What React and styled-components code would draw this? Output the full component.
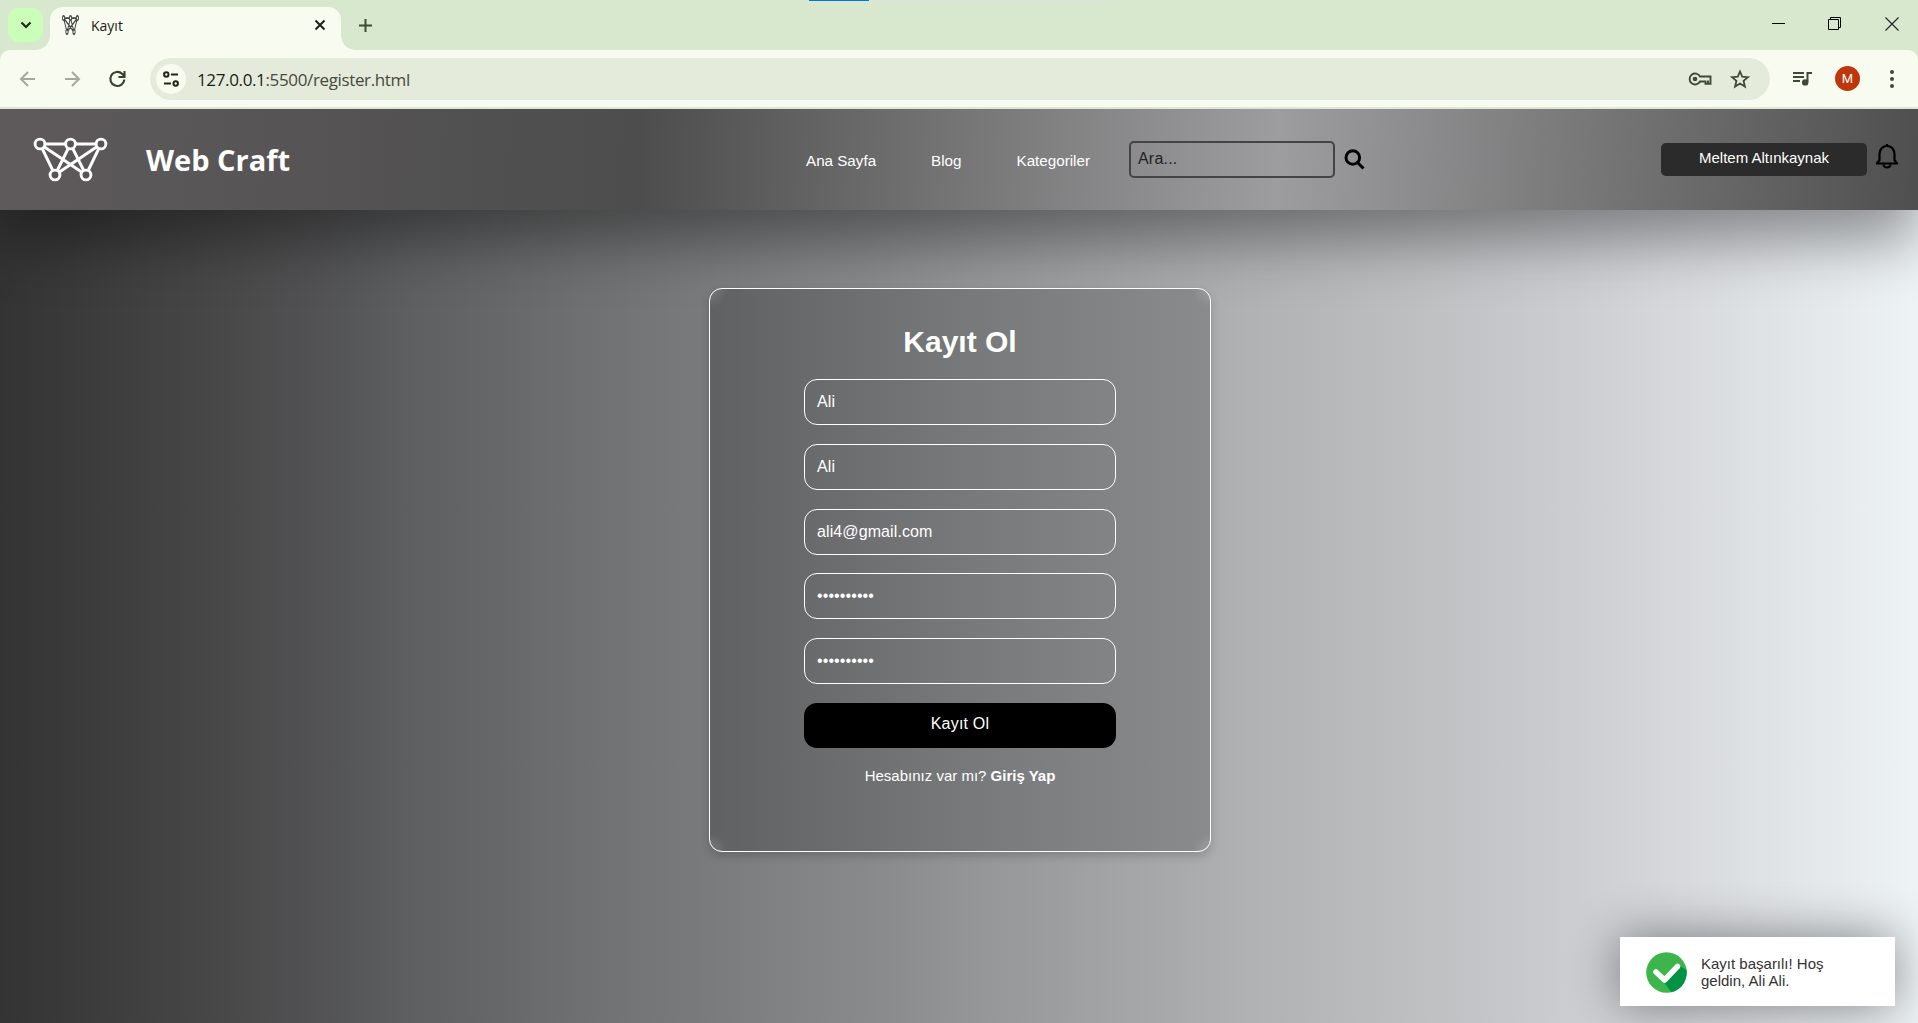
import React from "react";
import styled, { createGlobalStyle } from "styled-components";

const Global = createGlobalStyle`
  * { box-sizing: border-box; }
  html, body { margin: 0; padding: 0; overflow: hidden; }
  body { font-family: "Liberation Sans", Arial, sans-serif; }
  a { color: inherit; text-decoration: none; }
`;

const Window = styled.div`
  display: flex;
  flex-direction: column;
  width: 1918px;
  height: 1023px;
  overflow: hidden;
`;

/* ---------- browser frame ---------- */
const TabStrip = styled.div`
  position: relative;
  display: flex;
  align-items: flex-end;
  height: 50px;
  flex: none;
  padding-left: 8px;
  background: #d8e8ce;
`;
const LoadTrack = styled.div`
  position: absolute;
  top: 0;
  left: 809px;
  width: 301px;
  height: 1px;
  background: linear-gradient(to right, #0078d4 60px, #dfe1e4 60px);
`;
const TabSearch = styled.button`
  width: 35px;
  height: 34px;
  margin: 0 7px 8px 0;
  padding: 0;
  border: 0;
  border-radius: 11px;
  background: #cbfeb9;
  display: grid;
  place-items: center;
`;
const Tab = styled.div`
  position: relative;
  display: flex;
  align-items: center;
  width: 291px;
  height: 43px;
  padding: 0 15px 7px 12px;
  border-radius: 13px 13px 0 0;
  background: #f8fcf0;
  &::before, &::after {
    content: "";
    position: absolute;
    bottom: 0;
    width: 14px;
    height: 14px;
  }
  &::before { left: -14px; background: radial-gradient(circle at 0 0, transparent 13.5px, #f8fcf0 14px); }
  &::after { right: -14px; background: radial-gradient(circle at 100% 0, transparent 13.5px, #f8fcf0 14px); }
`;
const TabTitle = styled.span`
  flex: 1;
  margin-left: 12px;
  font: 14px "Open Sans", "Noto Sans", sans-serif;
  letter-spacing: 0;
  color: #1b1d17;
`;
const NewTab = styled.div`
  display: flex;
  margin: 0 auto 17px 17px;
`;
const WindowButtons = styled.div`
  display: flex;
  align-items: center;
  height: 50px;
  padding: 0 19px 2px 0;
  gap: 43px;
`;
const Toolbar = styled.div`
  display: flex;
  align-items: center;
  height: 59px;
  flex: none;
  padding: 0 16px 0 18px;
  border-bottom: 2px solid #e0e6d5;
  background: #f8fcf0;
  border-radius: 10px 10px 0 0;
`;
const Chrome = styled.div`
  flex: none;
  background: linear-gradient(#d8e8ce 80px, #f8fcf0 80px);
`;
const NavIcons = styled.div`
  display: flex;
  gap: 25px;
  width: 132px;
`;
const Address = styled.div`
  display: flex;
  align-items: center;
  flex: 1;
  height: 42px;
  padding: 0 19px 0 6px;
  border-radius: 21px;
  background: #e5ebdb;
`;
const SiteInfo = styled.span`
  display: grid;
  place-items: center;
  width: 30px;
  height: 30px;
  margin-right: 11px;
  border-radius: 50%;
  background: #f8fcf0;
`;
const Url = styled.span`
  flex: 1;
  padding-top: 2px;
  font: 17px "Open Sans", "Noto Sans", sans-serif;
  letter-spacing: -0.36px;
  color: #46493f;
  b { font-weight: 400; color: #1a1c16; }
`;
const AddressIcons = styled.div`
  display: flex;
  align-items: center;
  gap: 17px;
`;
const ToolIcons = styled.div`
  display: flex;
  align-items: center;
  margin-left: 22px;
`;
const Avatar = styled.span`
  display: grid;
  place-items: center;
  width: 25px;
  height: 25px;
  margin: 0 22px 0 22px;
  border-radius: 50%;
  background: #c0360c;
  color: #fff;
  font: 13px Roboto, sans-serif;
`;

/* ---------- site ---------- */
const Page = styled.div`
  display: flex;
  flex-direction: column;
  align-items: center;
  position: relative;
  flex: 1;
  overflow: hidden;
  background: linear-gradient(to right, #333333 0%, #4a4a4b 12.5%, #525254 16.5%, #5c5e5f 21%, #6e6f70 30%, #88898b 45%, #97989a 52%, #b0b1b3 65%, #c0c1c3 75%, #cdced2 82.5%, #eef3f6 100%);
`;
const Header = styled.header`
  display: flex;
  align-items: center;
  align-self: stretch;
  height: 101px;
  flex: none;
  padding: 0 19px 0 33px;
  background: linear-gradient(92deg, #5e5a5b 0%, #4d4d4d 33.3%, #9d9d9f 66.6%, #4f4f4f 100%);
  box-shadow: 0 30px 60px rgba(0, 0, 0, 0.4);
`;
const Brand = styled.h1`
  width: 660px;
  margin: 0 0 0 38px;
  font: 700 29px/40px "Open Sans", "Noto Sans", sans-serif;
  color: #fff;
`;
const Nav = styled.nav`
  display: flex;
  gap: 55px;
  width: 323px;
  padding-top: 2px;
  color: #fff;
  font-size: 15.2px;
  white-space: nowrap;
`;
const Search = styled.div`
  display: flex;
  align-items: center;
  gap: 9px;
`;
const SearchBox = styled.div`
  width: 206px;
  height: 37px;
  padding: 7px;
  border: 2px solid #444;
  border-radius: 5px;
  color: #222;
  font-size: 16px;
  line-height: 18px;
  letter-spacing: 0.2px;
`;
const UserArea = styled.div`
  display: flex;
  align-items: flex-start;
  gap: 8px;
  height: 33px;
  margin-left: auto;
`;
const UserButton = styled.button`
  width: 206px;
  height: 33px;
  padding: 0 0 4px;
  border: 0;
  border-radius: 5px;
  background: #2b2b2b;
  color: #fff;
  font: 15px "Liberation Sans", Arial, sans-serif;
`;
const Card = styled.section`
  display: flex;
  flex-direction: column;
  align-items: center;
  width: 502px;
  height: 564px;
  flex: none;
  margin: 78px 0 0 2px;
  padding-top: 33px;
  border: 1px solid #fff;
  border-radius: 13px;
  color: #fff;
  background:
    radial-gradient(circle at 0 0, rgba(255,255,255,.16), transparent 18px),
    radial-gradient(circle at 100% 0, rgba(255,255,255,.16), transparent 18px),
    radial-gradient(circle at 0 100%, rgba(255,255,255,.16), transparent 18px),
    radial-gradient(circle at 100% 100%, rgba(255,255,255,.16), transparent 18px),
    linear-gradient(to right, #606163, #777879 50%, #8a8b8d);
  box-shadow: 0 4px 10px rgba(0, 0, 0, 0.18);
`;
const Title = styled.h2`
  height: 40px;
  margin: 0 0 17px;
  font-size: 30px;
  line-height: 40px;
`;
const Field = styled.div`
  display: flex;
  align-items: center;
  width: 312px;
  height: 46px;
  margin-bottom: 18.8px;
  padding: 0 12px;
  border: 1px solid #fff;
  border-radius: 13px;
  font-size: 16px;
  letter-spacing: 0.1px;
`;
const Submit = styled.button`
  width: 312px;
  height: 45px;
  padding: 0 0 2px;
  border: 0;
  border-radius: 13px;
  background: #000;
  color: #fff;
  font: 16px "Liberation Sans", Arial, sans-serif;
  letter-spacing: 0.2px;
`;
const Hint = styled.p`
  margin: 19px 0 0;
  font-size: 15px;
`;
const Toast = styled.div`
  position: absolute;
  right: 23px;
  bottom: 17px;
  display: flex;
  align-items: center;
  gap: 14px;
  width: 275px;
  height: 69px;
  padding: 1px 0 0 26px;
  background: #fff;
  box-shadow: 0 0 50px rgba(0, 0, 0, 0.45);
  color: #333;
  font-size: 15px;
  line-height: 17px;
`;

const Web = ({ w, h, color, stroke, fill }) => (
  <svg width={w} height={h} viewBox="0 0 75 45" preserveAspectRatio="none" fill="none" stroke={color} strokeWidth={stroke}>
    <path d="M7 7H68M7 7L22 38M7 7L53 38M37.5 7L22 38M37.5 7L53 38M68 7L22 38M68 7L53 38" />
    {[[7, 7], [37.5, 7], [68, 7], [22, 38], [53, 38]].map(([x, y]) => (
      <circle key={x} cx={x} cy={y} r="4.9" fill={fill} />
    ))}
  </svg>
);

const Icon = ({ w = 16, h = 16, children, color = "#3e4a36", sw = 2, ...rest }) => (
  <svg width={w} height={h} viewBox={`0 0 ${w} ${h}`} fill="none" stroke={color} strokeWidth={sw} {...rest}>
    {children}
  </svg>
);

const Bell = styled(Icon)`
  display: block;
`;

export default function App() {
  return (
    <Window>
      <Global />
      <Chrome>
        <TabStrip>
          <LoadTrack />
          <TabSearch>
            <Icon w={12} h={8} color="#1d2b16" sw={2.2}><path d="M1.5 1.5L6 6L10.5 1.5" /></Icon>
          </TabSearch>
          <Tab>
            <Web w={17} h={20} color="#454545" stroke={4} fill="#f8fcf0" />
            <TabTitle>Kayıt</TabTitle>
            <Icon w={12} h={12} color="#1d1f1a"><path d="M1.5 1.5L10.5 10.5M10.5 1.5L1.5 10.5" /></Icon>
          </Tab>
          <NewTab>
            <Icon w={15} h={15}><path d="M7.5 1V14M1 7.5H14" /></Icon>
          </NewTab>
          <WindowButtons>
            <Icon w={13} h={14} color="#000" sw={1}><path d="M0 6.5H13" /></Icon>
            <Icon w={14} h={14} color="#000" sw={1}><path d="M.5 2.5H10.5V12.5H.5ZM2.5 2.500V.5H12.5V10.5H10.5" /></Icon>
            <Icon w={14} h={14} color="#222" sw={1.1}><path d="M.5.5L13.5 13.5M13.5.5L.5 13.5" /></Icon>
          </WindowButtons>
        </TabStrip>
        <Toolbar>
          <NavIcons>
            <Icon w={20} h={18} color="#a3a99c"><path d="M17 9H3M10 2L3 9L10 16" /></Icon>
            <Icon w={20} h={18} color="#a3a99c"><path d="M2 9H16M9 2L16 9L9 16" /></Icon>
            <Icon w={19} h={18} color="#35422e" sw={2.1}><path d="M16.3 9.5A7 7 0 1 1 14.300 4L16.300 6M16.500 1V7H10.500" /></Icon>
          </NavIcons>
          <Address>
            <SiteInfo>
              <Icon w={16} h={16} color="#1d2b16"><circle cx="3.3" cy="3.5" r="2.2" /><path d="M8 3.5H15M1 12.5H8" /><circle cx="12.7" cy="12.5" r="2.2" /></Icon>
            </SiteInfo>
            <Url><b>127.0.0.1</b>:5500/register.html</Url>
            <AddressIcons>
              <Icon w={24} h={16} sw={1.9}><path d="M12 5.5H22.5V12.8H17.500V10.5H12A5.500 5.500 0 1 1 12 5.500Z" /><path d="M20 12V9.500" sw={1} /><circle cx="7" cy="8" r="2.3" fill="#3e4a36" stroke="none" /></Icon>
              <Icon w={22} h={20} sw={1.8}><path d="M11 2.500L13.200 7.700L18.900 8.200L14.600 11.900L15.900 17.500L11 14.500L6.100 17.500L7.400 11.900L3.100 8.200L8.800 7.700Z" /></Icon>
            </AddressIcons>
          </Address>
          <ToolIcons>
            <Icon w={21} h={18}><path d="M1 3H12M1 7H12M1 11H8M15.500 12V3H20" /><circle cx="13.200" cy="12.400" r="3.200" fill="#3e4a36" stroke="none" /></Icon>
            <Avatar>M</Avatar>
            <Icon w={20} h={20}><g stroke="none" fill="#3e4a36"><circle cx="10" cy="3" r="2" /><circle cx="10" cy="10" r="2" /><circle cx="10" cy="17" r="2" /></g></Icon>
          </ToolIcons>
        </Toolbar>
      </Chrome>
      <Page>
        <Header>
          <Web w={75} h={45} color="#fff" stroke={2.9} fill="#565455" />
          <Brand>Web Craft</Brand>
          <Nav><a>Ana Sayfa</a><a>Blog</a><a>Kategoriler</a></Nav>
          <Search>
            <SearchBox>Ara...</SearchBox>
            <Icon w={21} h={21} color="#000" sw={3}><circle cx="8.8" cy="8.5" r="6.8" /><path d="M13.500 13.500L19.500 19.500" /></Icon>
          </Search>
          <UserArea>
            <UserButton>Meltem Altınkaynak</UserButton>
            <Bell w={24} h={27} color="#000" sw={2.2}><path d="M2 20.500H22L19.500 17V11C19.500 6 16 3 12 3S4.500 6 4.500 11V17Z" strokeLinejoin="round" /><path d="M8.500 21.500A3.500 3 0 0 0 15.500 21.500M12 1V3" /></Bell>
          </UserArea>
        </Header>
        <Card>
          <Title>Kayıt Ol</Title>
          <Field>Ali</Field>
          <Field>Ali</Field>
          <Field>ali4@gmail.com</Field>
          <Field>••••••••••</Field>
          <Field>••••••••••</Field>
          <Submit>Kayıt Ol</Submit>
          <Hint>Hesabınız var mı? <b>Giriş Yap</b></Hint>
        </Card>
        <Toast>
          <svg width="41" height="41" viewBox="0 0 41 41">
            <circle cx="20.5" cy="20.5" r="20.3" fill="#3db54a" />
            <path d="M18 30L33 13L40.500 18A20.300 20.300 0 0 1 28 39.500L25 40Z" fill="#009345" />
            <path d="M10 20L18.500 28L31.500 14.500" fill="none" stroke="#fff" strokeWidth="5.5" strokeLinecap="round" strokeLinejoin="round" />
          </svg>
          <span>Kayıt başarılı! Hoş<br />geldin, Ali Ali.</span>
        </Toast>
      </Page>
    </Window>
  );
}
